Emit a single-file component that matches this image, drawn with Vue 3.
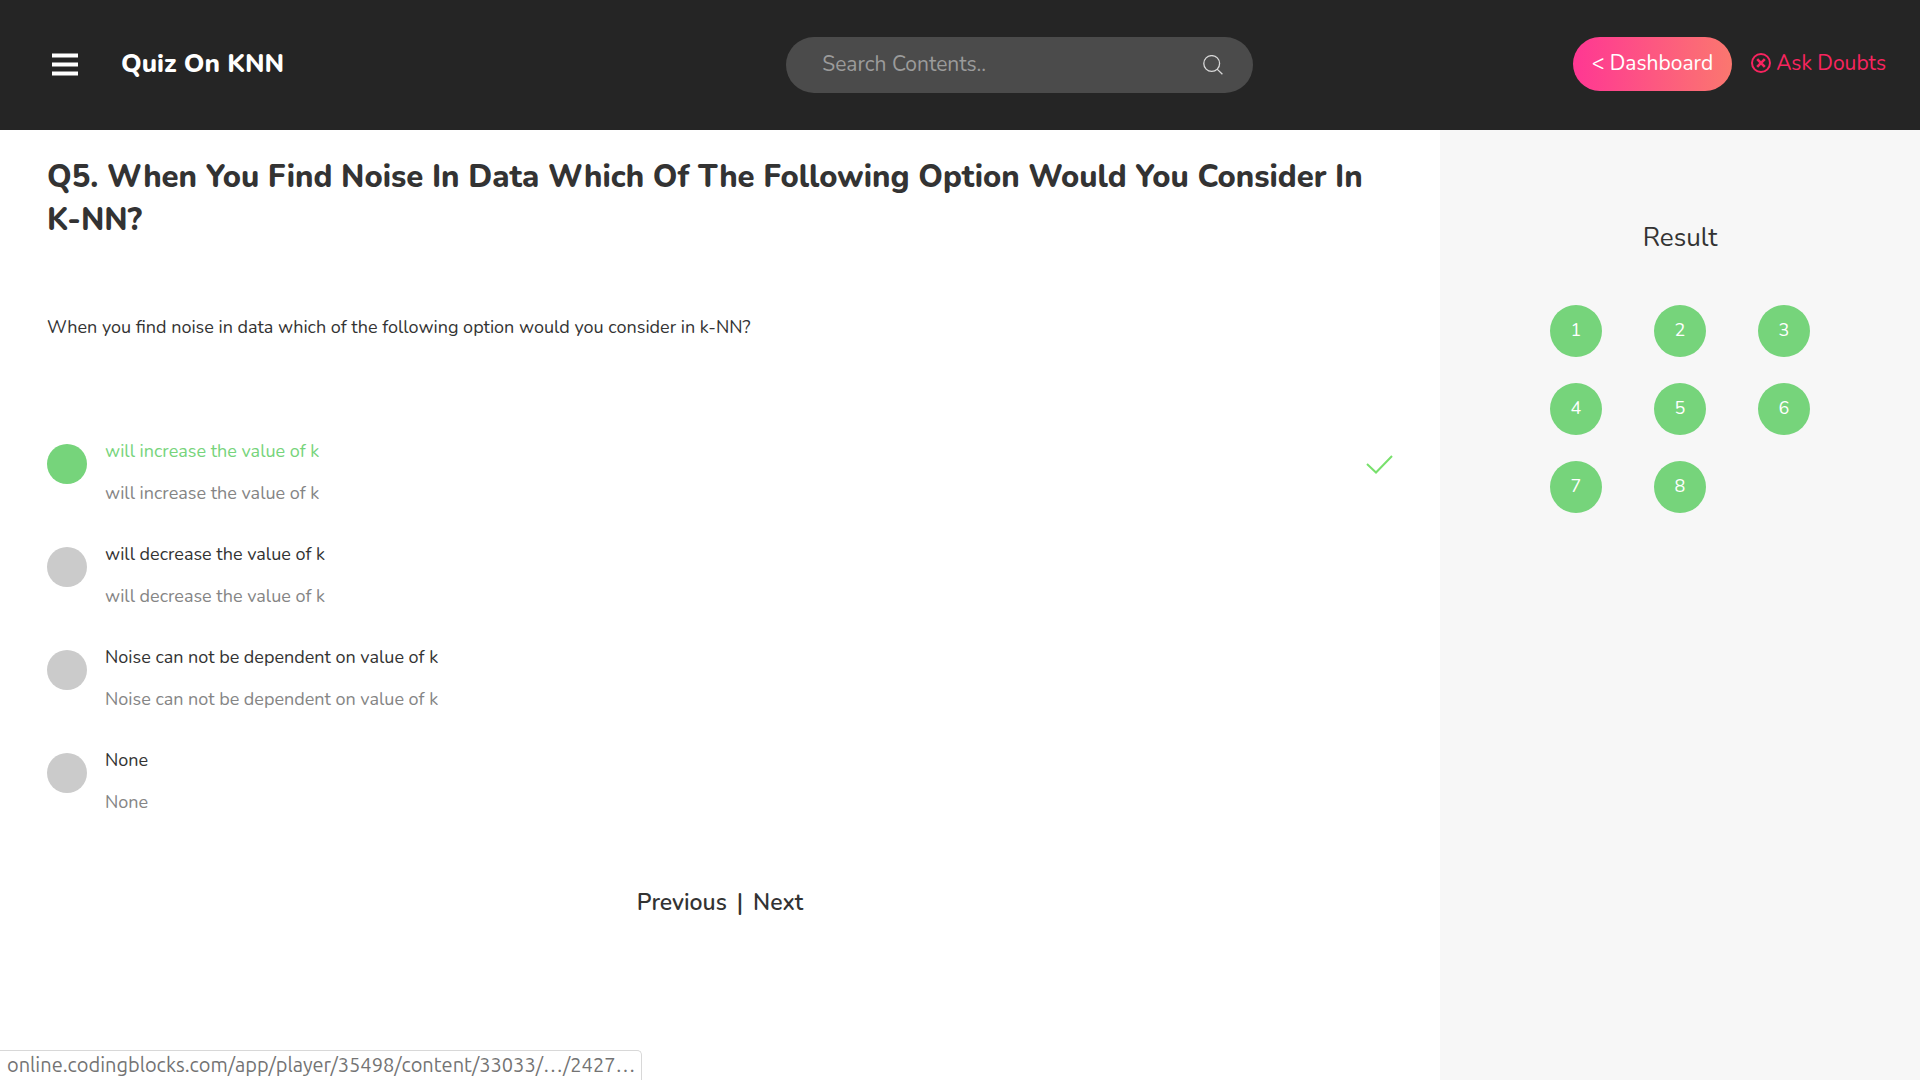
<script setup>
import { ref } from 'vue'

const question = 'When you find noise in data which of the following option would you consider in k-NN?'
const options = [
  'will increase the value of k',
  'will decrease the value of k',
  'Noise can not be dependent on value of k',
  'None',
]
const selected = ref(0)
const search = ref('')
</script>

<template>
  <div class="page">
    <header class="topbar">
      <div class="brand">
        <button class="menu" type="button" aria-label="Menu">
          <svg width="26" height="23" viewBox="0 0 26 23" aria-hidden="true">
            <path d="M0 .5h26v4H0zM0 9.500h26v4H0zM0 18.500h26v4H0z" fill="#fff" />
          </svg>
        </button>
        <span class="title">Quiz On KNN</span>
      </div>
      <form class="search" role="search" @submit.prevent>
        <input v-model="search" type="text" placeholder="Search Contents.." aria-label="Search Contents" />
        <button type="submit" aria-label="Search">
          <svg width="20" height="20" viewBox="0 0 20 20" fill="none" stroke="#d8d8d8" stroke-width="1.3" aria-hidden="true">
            <circle cx="8.7" cy="8.5" r="7.9" />
            <path d="M14.1 14.1l5.3 5.1" />
          </svg>
        </button>
      </form>
      <nav class="actions">
        <a class="dashboard" href="#dashboard">&lt; Dashboard</a>
        <a class="doubts" href="#doubts">
          <svg width="20" height="20" viewBox="0 0 20 20" fill="none" stroke="currentColor" aria-hidden="true">
            <circle cx="10" cy="10" r="9" stroke-width="2" />
            <path d="M6.2 6.2l7.6 7.6M13.8 6.2l-7.6 7.6" stroke-width="2.6" />
          </svg>
          Ask Doubts
        </a>
      </nav>
    </header>

    <div class="body">
      <main class="quiz">
        <h1>Q5. {{ question }}</h1>
        <p class="question">{{ question }}</p>

        <div class="options" role="radiogroup" aria-label="Answers">
          <label v-for="(option, i) in options" :key="option" class="option" :class="{ correct: i === 0 }">
            <input v-model="selected" type="radio" name="answer" :value="i" />
            <span class="copy">
              <span class="name">{{ option }}</span>
              <span class="detail">{{ option }}</span>
            </span>
            <svg v-if="i === 0" class="tick" width="27" height="19" viewBox="0 0 27 19" aria-hidden="true">
              <path d="M1 9l9 8.500L26 1" fill="none" stroke="#78e06c" stroke-width="2" />
            </svg>
          </label>
        </div>

        <nav class="pager">
          <a href="#previous">Previous</a>
          <span>|</span>
          <a href="#next">Next</a>
        </nav>
      </main>

      <aside class="result">
        <h2>Result</h2>
        <div class="numbers">
          <button v-for="n in 8" :key="n" type="button">{{ n }}</button>
        </div>
      </aside>
    </div>

    <div class="status">online.codingblocks.com/app/player/35498/content/33033/…/2427…</div>
  </div>
</template>

<style>
body {
  margin: 0;
}
</style>

<style scoped>
.page {
  display: flex;
  flex-direction: column;
  min-height: 100vh;
  background: #fff;
  color: #333;
  font-family: Nunito, Lato, sans-serif;
  font-size: 18px;
  line-height: 28px;
}
.page * {
  box-sizing: border-box;
}
a {
  color: inherit;
  text-decoration: none;
}
button {
  border: 0;
  padding: 0;
  background: none;
  font: inherit;
  color: inherit;
  cursor: pointer;
}
svg {
  display: block;
  flex: none;
}
.topbar {
  display: grid;
  grid-template-columns: 7fr 467px 6fr;
  align-items: start;
  column-gap: 24px;
  padding: 37px 34px 37px 52px;
  background: #252525;
  color: #fff;
}
.brand {
  display: flex;
  align-items: center;
  gap: 43px;
  height: 54px;
}
.title {
  font-size: 26px;
  font-weight: 800;
}
.search {
  display: flex;
  align-items: center;
  height: 56px;
  padding: 0 30px 0 36px;
  border-radius: 28px;
  background: #4b4b4b;
}
.search input {
  flex: 1;
  min-width: 0;
  border: 0;
  padding: 0 0 2px;
  outline: 0;
  background: transparent;
  color: #fff;
  font: inherit;
  font-size: 21px;
}
.search input::placeholder {
  color: #9b9b9b;
  opacity: 1;
}
.actions {
  display: flex;
  align-items: center;
  justify-content: flex-end;
  gap: 19px;
  font-size: 21px;
}
.dashboard {
  padding: 12px 19px 14px;
  border-radius: 27px;
  background: linear-gradient(90deg, #ff3793, #fb776f);
}
.doubts {
  display: flex;
  align-items: center;
  gap: 5px;
  padding-bottom: 2px;
  color: #f8245f;
}
.body {
  flex: 1;
  display: grid;
  grid-template-columns: minmax(0, 3fr) minmax(0, 1fr);
}
.quiz {
  padding: 26px 47px;
}
h1 {
  margin: 0;
  font-size: 31px;
  font-weight: 800;
  line-height: 43px;
  text-transform: capitalize;
}
.question {
  margin: 71px 0 89px;
}
.options {
  display: flex;
  flex-direction: column;
  gap: 19px;
}
.option {
  display: flex;
  align-items: flex-start;
  cursor: pointer;
}
.option input {
  appearance: none;
  flex: none;
  width: 40px;
  height: 40px;
  margin: 14px 18px 0 0;
  border-radius: 50%;
  background: #cbcbcb;
}
.copy {
  flex: 1;
  display: flex;
  flex-direction: column;
  line-height: 42px;
}
.detail {
  color: #858585;
}
.correct input {
  background: #76d47b;
}
.correct .name {
  color: #76d47b;
}
.tick {
  margin-top: 25px;
}
.pager {
  display: flex;
  justify-content: center;
  gap: 10px;
  margin-top: 66px;
  font-size: 23px;
  font-weight: 600;
}
.result {
  padding: 94px 20px 40px;
  background: #f7f7f7;
}
h2 {
  margin: 0;
  font-size: 26px;
  font-weight: 400;
  text-align: center;
}
.numbers {
  display: grid;
  grid-template-columns: repeat(3, 52px);
  gap: 26px 52px;
  justify-content: center;
  margin-top: 53px;
}
.numbers button {
  height: 52px;
  padding-bottom: 2px;
  border-radius: 50%;
  background: #76d47b;
  color: #fff;
}
.status {
  position: fixed;
  left: 0;
  bottom: 0;
  padding: 0 6px 1px 7px;
  border: 1px solid #d8d8d8;
  border-width: 1px 1px 0 0;
  border-top-right-radius: 5px;
  background: #fff;
  color: #737373;
  font-family: Ubuntu, "Noto Sans", sans-serif;
  font-size: 20px;
}
</style>
